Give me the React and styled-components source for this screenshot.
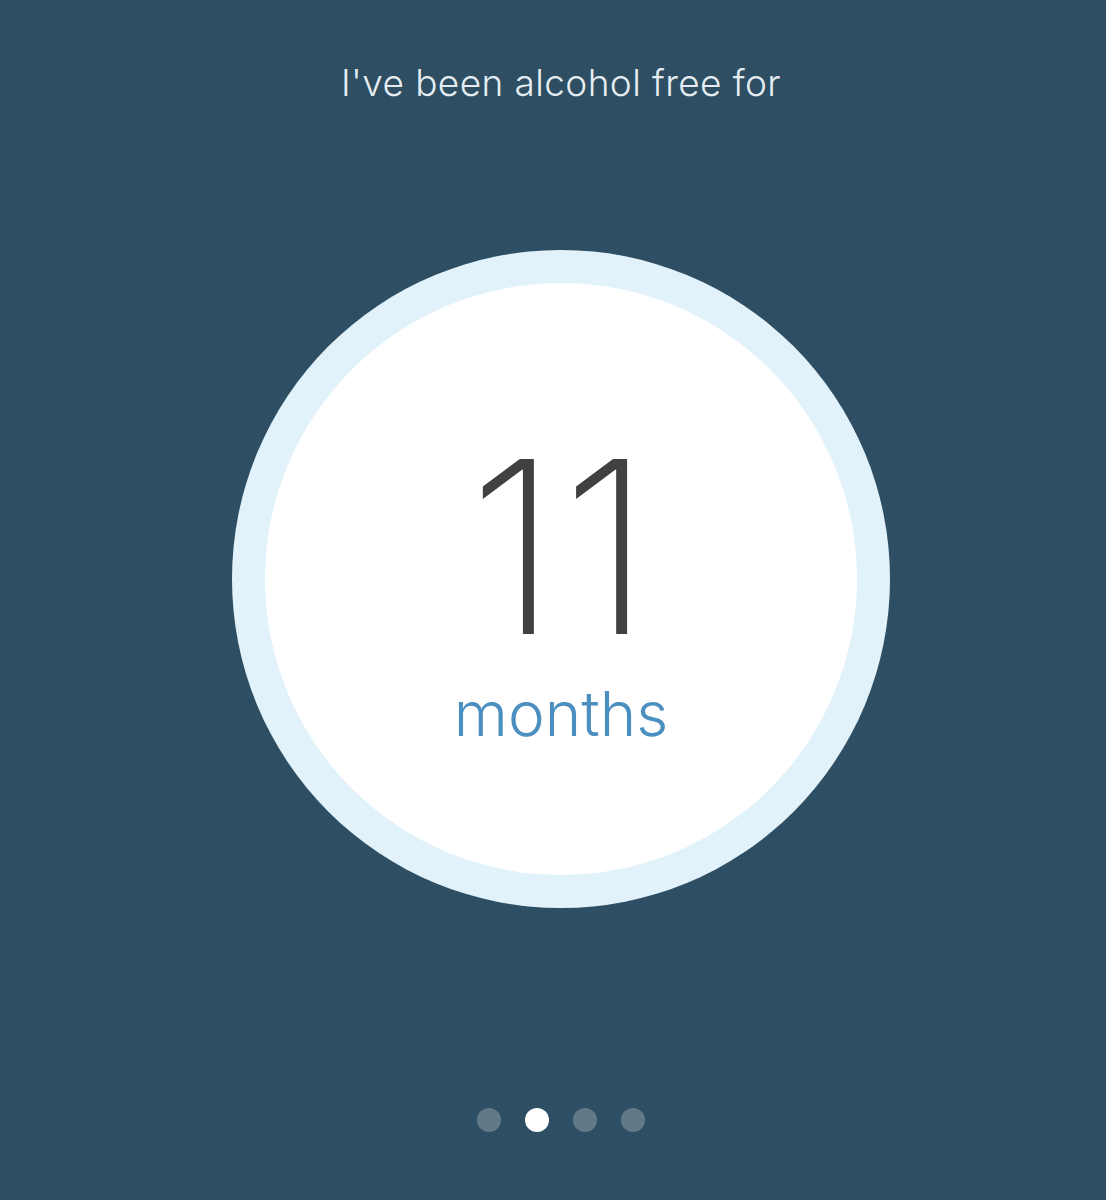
import styled, { createGlobalStyle } from 'styled-components';

const GlobalStyle = createGlobalStyle`
  html, body {
    margin: 0;
    padding: 0;
    background: #2d4e63;
  }
  body {
    font-family: Inter, "Noto Sans", sans-serif;
  }
`;

const Screen = styled.div`
  width: 1106px;
  height: 1200px;
  box-sizing: border-box;
  padding-left: 16px;
  background: #2d4e63;
  display: flex;
  flex-direction: column;
  align-items: center;
  overflow: hidden;
`;

const Title = styled.h1`
  margin: 58px 0 0;
  font-size: 37px;
  font-weight: 300;
  line-height: 50px;
  letter-spacing: 0.4px;
  color: #e6edf2;
`;

const Ring = styled.div`
  margin-top: 142px;
  width: 658px;
  height: 658px;
  box-sizing: border-box;
  padding: 33px;
  border-radius: 50%;
  background: #e2f2fb;
`;

const Face = styled.div`
  width: 100%;
  height: 100%;
  box-sizing: border-box;
  padding-top: 144px;
  border-radius: 50%;
  background: #ffffff;
  display: flex;
  flex-direction: column;
  align-items: center;
`;

const Count = styled.div`
  font-size: 240px;
  font-weight: 200;
  line-height: 1;
  color: #414141;
  letter-spacing: 2px;
`;

const Unit = styled.div`
  font-size: 62px;
  font-weight: 300;
  line-height: 1;
  color: #4a8fbf;
  margin-top: 16px;
`;

const Dots = styled.div`
  margin-top: 200px;
  display: flex;
  gap: 24px;
`;

const Dot = styled.span`
  width: 24px;
  height: 24px;
  border-radius: 50%;
  background: ${props => props.active ? '#ffffff' : 'rgba(255, 255, 255, 0.25)'};
`;

export default function App() {
  const pages = [0, 1, 2, 3];
  const current = 1;

  return (
    <>
      <GlobalStyle />
      <Screen>
        <Title>I've been alcohol free for</Title>
        <Ring>
          <Face>
            <Count>11</Count>
            <Unit>months</Unit>
          </Face>
        </Ring>
        <Dots>
          {pages.map(p => <Dot key={p} active={p === current} />)}
        </Dots>
      </Screen>
    </>
  );
}
